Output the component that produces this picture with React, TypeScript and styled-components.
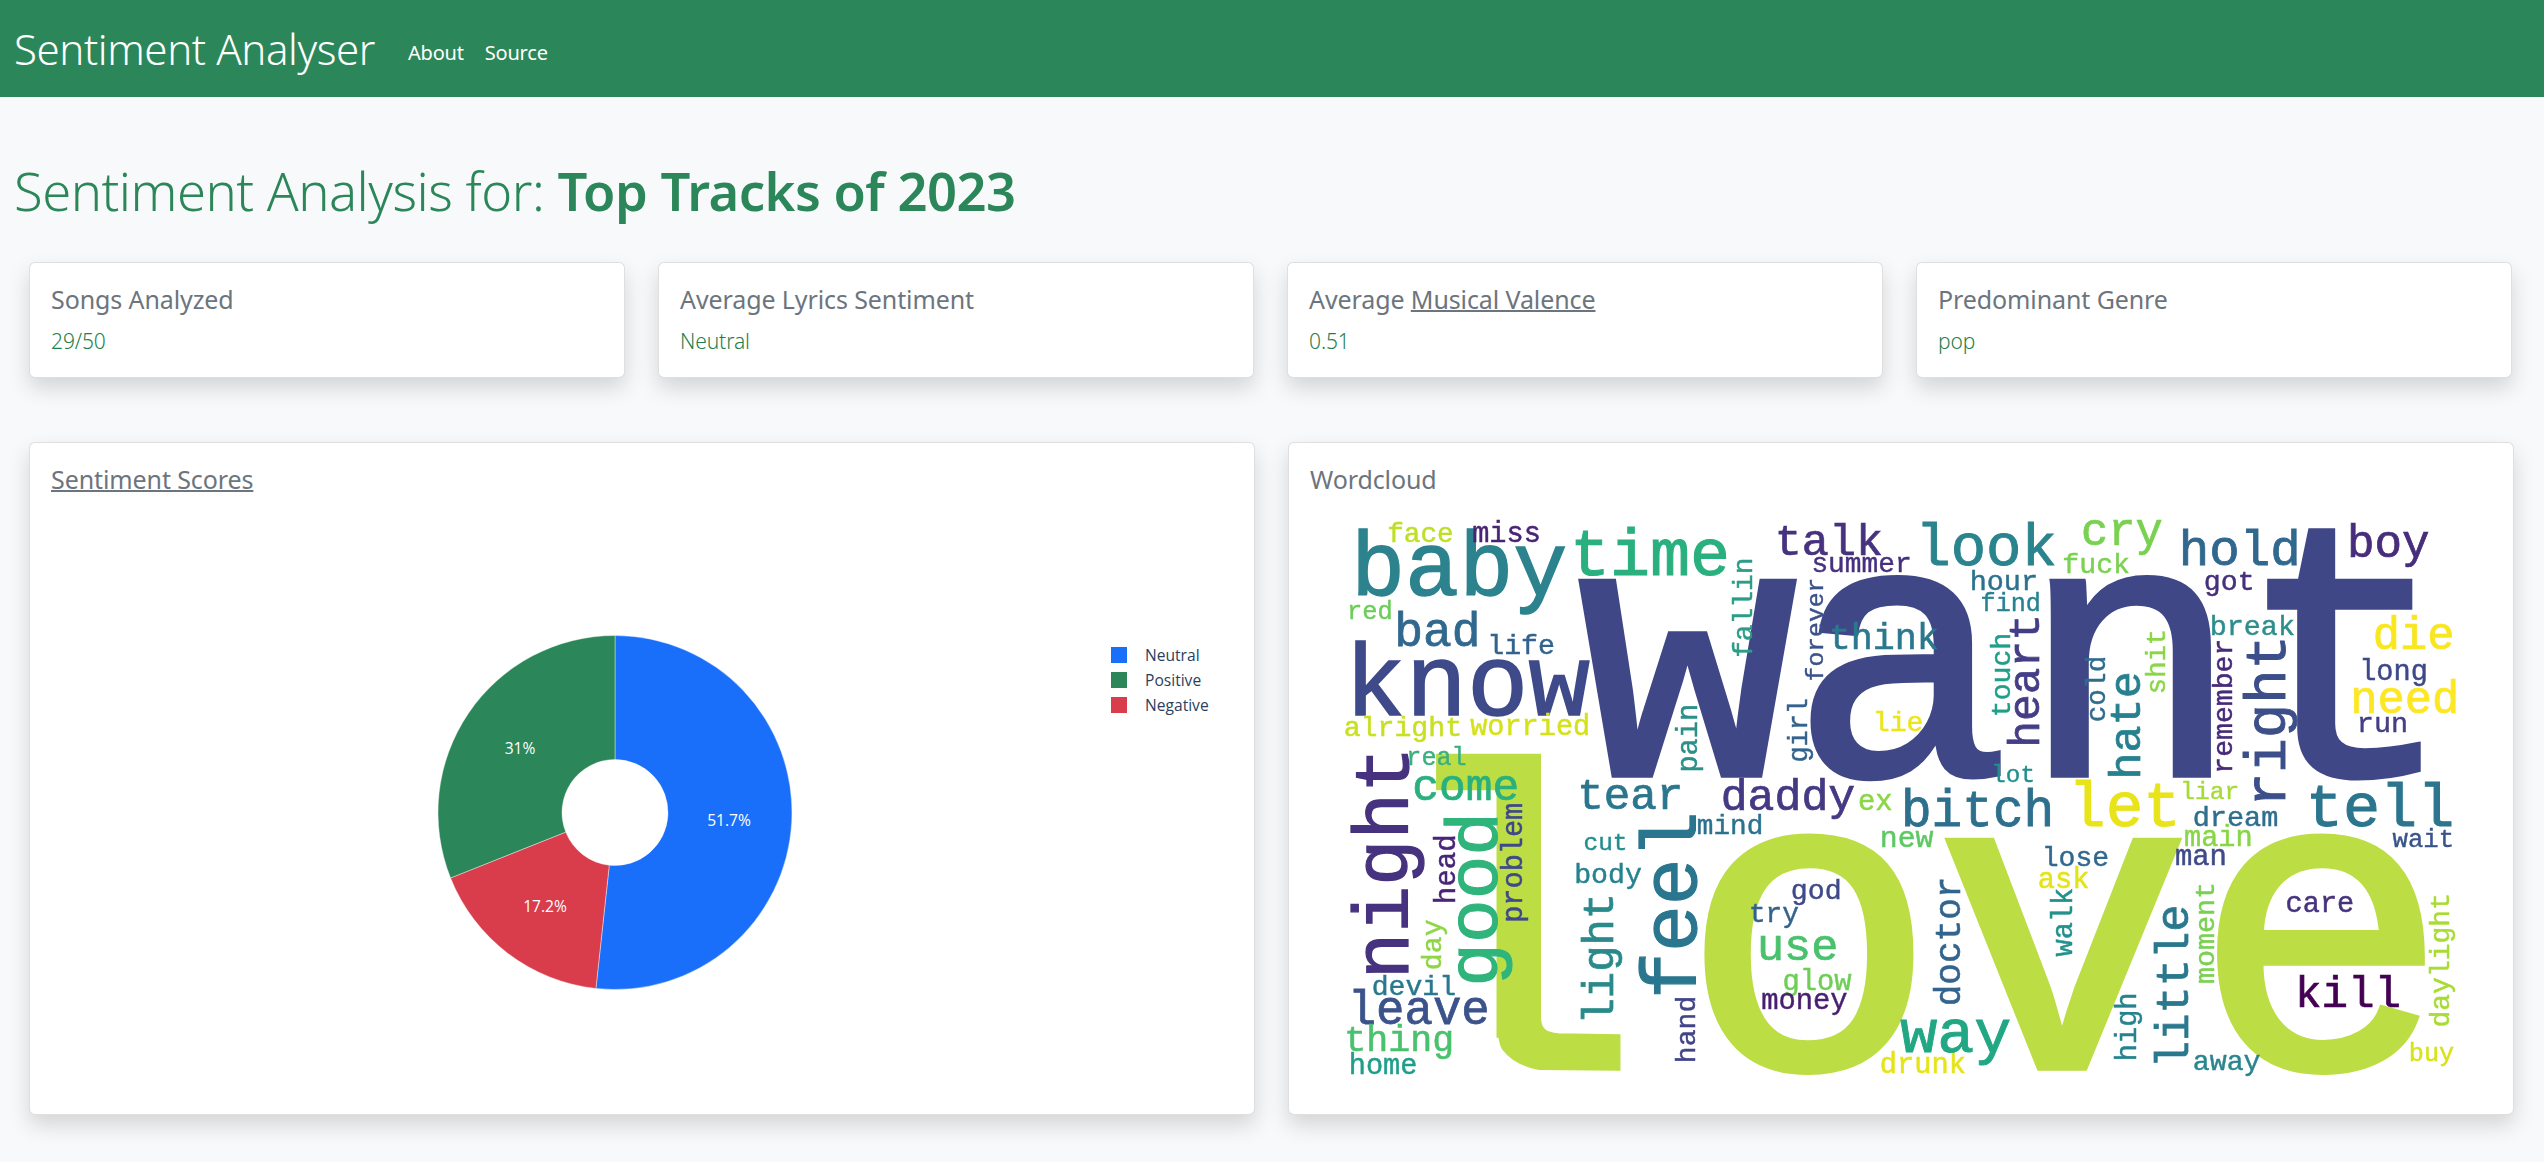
import React from "react";
import styled, { createGlobalStyle } from "styled-components";

const GlobalStyle = createGlobalStyle`
  html, body {
    margin: 0;
    padding: 0;
    background-color: #f8f9fa;
    font-family: "Noto Sans", sans-serif;
  }
`;

// [text, start, end, baseline, colour] in cloud units. Rotated words read upward.
type Word = [string, number, number, number, string];

const CLOUD_SCALE = 2.529;
const RIGHT_HALF_OFFSET = 600 * CLOUD_SCALE;

const GREEN = "#2b8759";

// the two big words get their letters placed one by one
const bigWords = [
  { text: "love", size: 1083, base: 1435, colour: "#bcdd44", xs: "209 960 1603 2255" },
  { text: "want", size: 925, base: 695, colour: "#404787", xs: "700 1238 1820 2365" },
];

const leftFlat: Word[] = [
  ["baby", 140, 660, 240, "#2c838e"],
  ["time", 690, 1075, 190, "#2ab07f"],
  ["talk", 1205, 1465, 138, "#46327e"],
  ["face", 222, 382, 105, "#bddf26"],
  ["miss", 437, 602, 105, "#482475"],
  ["summer", 1295, 1540, 182, "#46307e"],
  ["red", 120, 228, 300, "#6ccd5a"],
  ["bad", 243, 447, 370, "#31688e"],
  ["life", 475, 638, 390, "#33638d"],
  ["know", 125, 715, 545, "#3e4a89"],
  ["alright", 112, 403, 598, "#c8e020"],
  ["worried", 432, 727, 595, "#d5e21a"],
  ["real", 270, 415, 670, "#3aaf80"],
  ["come", 288, 545, 760, "#2ab07f"],
  ["tear", 705, 960, 782, "#2a768e"],
  ["daddy", 1068, 1395, 783, "#443a83"],
  ["ex", 1413, 1492, 785, "#8bd646"],
  ["mind", 1005, 1165, 845, "#2c728e"],
  ["cut", 718, 822, 885, "#218e8d"],
  ["new", 1468, 1595, 878, "#5ec962"],
  ["body", 695, 858, 968, "#26828e"],
  ["use", 1160, 1352, 1163, "#4ac16d"],
  ["god", 1243, 1363, 1008, "#3e4a89"],
  ["try", 1137, 1255, 1068, "#33638d"],
  ["glow", 1222, 1388, 1240, "#6ece58"],
  ["money", 1168, 1378, 1288, "#481f70"],
  ["devil", 183, 388, 1252, "#2a788e"],
  ["leave", 125, 470, 1325, "#3b528b"],
  ["thing", 115, 382, 1393, "#4ac16d"],
  ["home", 125, 290, 1452, "#1f9e89"],
  ["drunk", 1468, 1677, 1450, "#e5e419"],
  ["way", 1525, 1787, 1395, "#22a785"],
  ["lie", 1450, 1570, 583, "#ece51b"],
  ["think", 1340, 1607, 378, "#2a788e"],
  ["bitch", 1525, 1897, 825, "#2d708e"],
];

const leftTurned: Word[] = [
  ["night", 1200, 635, 270, "#46327e"],
  ["good", 1220, 800, 495, "#2fb47c"],
  ["feel", 1250, 800, 1000, "#2a768e"],
  ["light", 1320, 1000, 790, "#2a8a8b"],
  ["problem", 1065, 770, 560, "#3f4889"],
  ["head", 1018, 850, 390, "#482576"],
  ["day", 1185, 1065, 355, "#8ed645"],
  ["hand", 1420, 1258, 997, "#414487"],
  ["pain", 685, 520, 1002, "#2a9088"],
  ["fallin", 395, 150, 1140, "#2c9c88"],
  ["forever", 455, 200, 1320, "#3b528b"],
  ["girl", 660, 505, 1280, "#33638d"],
];

const rightFlat: Word[] = [
  ["look", 45, 385, 165, "#2a848e"],
  ["cry", 462, 655, 115, "#7ad151"],
  ["hold", 710, 1003, 165, "#31688e"],
  ["boy", 1135, 1330, 145, "#472d7b"],
  ["fuck", 412, 575, 185, "#7bd151"],
  ["hour", 178, 342, 228, "#2c728e"],
  ["find", 205, 350, 280, "#26828e"],
  ["got", 770, 890, 228, "#462f7c"],
  ["break", 785, 992, 342, "#2c8e8d"],
  ["die", 1200, 1393, 378, "#f8e621"],
  ["long", 1163, 1328, 455, "#3f4889"],
  ["need", 1143, 1405, 540, "#fde725"],
  ["run", 1157, 1278, 588, "#433e85"],
  ["lot", 232, 335, 712, "#218f8d"],
  ["liar", 710, 852, 755, "#a5db36"],
  ["let", 432, 698, 825, "#e8e419"],
  ["tell", 1033, 1390, 825, "#2b758e"],
  ["dream", 742, 950, 825, "#2e6e8e"],
  ["main", 720, 885, 875, "#88d548"],
  ["wait", 1247, 1395, 878, "#3a538b"],
  ["man", 697, 820, 922, "#3e4a89"],
  ["lose", 360, 522, 925, "#31688e"],
  ["ask", 350, 472, 982, "#e3e418"],
  ["care", 977, 1142, 1043, "#46327e"],
  ["kill", 1003, 1258, 1283, "#440154"],
  ["away", 742, 905, 1442, "#2a858e"],
  ["buy", 1288, 1395, 1420, "#d8e219"],
];

const rightTurned: Word[] = [
  ["heart", 620, 295, 350, "#433e85"],
  ["touch", 545, 340, 275, "#1f9e89"],
  ["hate", 700, 440, 605, "#27808e"],
  ["cold", 558, 398, 517, "#2f6c8e"],
  ["shit", 487, 330, 668, "#8bd646"],
  ["remember", 688, 355, 838, "#472a7a"],
  ["right", 768, 350, 970, "#3c4f8a"],
  ["doctor", 1275, 958, 150, "#32648e"],
  ["walk", 1150, 985, 432, "#21918c"],
  ["little", 1430, 1030, 725, "#2a788e"],
  ["moment", 1220, 970, 792, "#7ad151"],
  ["high", 1415, 1250, 595, "#26828e"],
  ["daylight", 1330, 998, 1385, "#a8db34"],
];

const wordSize = (text: string, span: number) =>
  span / (0.6 * text.length - 0.12);

const FlatWords = ({ words }: { words: Word[] }) => (
  <>
    {words.map(([text, start, end, base, colour]) => {
      const size = wordSize(text, end - start);
      return (
        <CloudWord
          key={text}
          x={start - 0.06 * size}
          y={base}
          fontSize={size}
          fill={colour}
          stroke={colour}
          strokeWidth={size * 0.016}
        >
          {text}
        </CloudWord>
      );
    })}
  </>
);

const TurnedWords = ({ words }: { words: Word[] }) => (
  <>
    {words.map(([text, start, end, base, colour]) => {
      const size = wordSize(text, start - end);
      return (
        <CloudWord
          key={text}
          transform={`translate(${base} ${start + 0.06 * size}) rotate(-90)`}
          fontSize={size}
          fill={colour}
          stroke={colour}
          strokeWidth={size * 0.016}
        >
          {text}
        </CloudWord>
      );
    })}
  </>
);

// page coordinates, the pie is drawn from the top going clockwise
const CX = 615;
const CY = 812.5;
const OUTER = 177;
const INNER = 53;

const slicePath = (from: number, to: number) => {
  const point = (radius: number, turn: number) => {
    const angle = turn * 2 * Math.PI;
    return `${CX + radius * Math.sin(angle)} ${CY - radius * Math.cos(angle)}`;
  };
  const large = to - from > 0.5 ? 1 : 0;
  return `M${point(OUTER, from)} A${OUTER} ${OUTER} 0 ${large} 1 ${point(OUTER, to)} L${point(INNER, to)} A${INNER} ${INNER} 0 ${large} 0 ${point(INNER, from)} Z`;
};

const slices = [
  { label: "51.7%", from: 0, to: 0.5172, colour: "#1a6ffa", x: 729, y: 826 },
  { label: "17.2%", from: 0.5172, to: 0.6897, colour: "#d93d4b", x: 545, y: 912 },
  { label: "31%", from: 0.6897, to: 1, colour: GREEN, x: 520, y: 754 },
];

const legend = [
  { label: "Neutral", colour: "#1a6ffa" },
  { label: "Positive", colour: GREEN },
  { label: "Negative", colour: "#d93d4b" },
];

const stats = [
  { title: "Songs Analyzed", value: "29/50" },
  { title: "Average Lyrics Sentiment", value: "Neutral" },
  { title: "Average ", hint: "Musical Valence", value: "0.51" },
  { title: "Predominant Genre", value: "pop" },
];

const App = () => {
  return (
    <Page>
      <GlobalStyle />
      <Navbar>
        <Brand>Sentiment Analyser</Brand>
        <NavLink>About</NavLink>
        <NavLink>Source</NavLink>
      </Navbar>

      <Heading>
        Sentiment Analysis for: <strong>Top Tracks of 2023</strong>
      </Heading>

      <StatGrid>
        {stats.map((stat) => (
          <StatCard key={stat.value}>
            <CardTitle>
              {stat.title}
              {stat.hint && <Hint>{stat.hint}</Hint>}
            </CardTitle>
            <StatValue>{stat.value}</StatValue>
          </StatCard>
        ))}
      </StatGrid>

      <ChartGrid>
        <ChartCard>
          <CardTitle>
            <Hint>Sentiment Scores</Hint>
          </CardTitle>
          <Figure viewBox="51 503 1182 591">
            {slices.map((slice) => (
              <path
                key={slice.label}
                d={slicePath(slice.from, slice.to)}
                fill={slice.colour}
                stroke="#ffffff"
                strokeWidth={0.4}
              />
            ))}
            {slices.map((slice) => (
              <SliceLabel
                key={slice.label}
                x={slice.x}
                y={slice.y}
                textAnchor="middle"
              >
                {slice.label}
              </SliceLabel>
            ))}
            {legend.map((item, i) => (
              <g key={item.label}>
                <rect
                  x={1111}
                  y={647 + i * 25}
                  width={16}
                  height={16}
                  fill={item.colour}
                />
                <LegendLabel x={1145} y={661 + i * 25}>
                  {item.label}
                </LegendLabel>
              </g>
            ))}
          </Figure>
        </ChartCard>

        <ChartCard>
          <CardTitle>Wordcloud</CardTitle>
          <CloudFigure viewBox="22.8 7.6 2989 1494.7">
            {bigWords.map((word) => (
              <CloudWord
                key={word.text}
                x={word.xs}
                y={word.base}
                fontSize={word.size}
                fill={word.colour}
                stroke={word.colour}
                strokeWidth={word.size * 0.016}
              >
                {word.text}
              </CloudWord>
            ))}
            <FlatWords words={leftFlat} />
            <TurnedWords words={leftTurned} />
            <g transform={`translate(${RIGHT_HALF_OFFSET} 0)`}>
              <FlatWords words={rightFlat} />
              <TurnedWords words={rightTurned} />
            </g>
          </CloudFigure>
        </ChartCard>
      </ChartGrid>
    </Page>
  );
};

export default App;

const Page = styled.div`
  min-height: 100vh;
  box-sizing: border-box;
  background-color: #f8f9fa;
  overflow: hidden;
`;

const Navbar = styled.nav`
  height: 97px;
  background-color: ${GREEN};
  display: flex;
  align-items: center;
  padding-left: 14px;
  color: white;
`;

const Brand = styled.span`
  font-size: 42px;
  font-weight: 300;
  letter-spacing: -0.4px;
  margin-right: 33px;
`;

const NavLink = styled.span`
  font-size: 20px;
  font-weight: 400;
  margin-right: 21px;
  letter-spacing: -0.2px;
  padding-top: 7px;
`;

const Heading = styled.h1`
  margin: 63px 0 0 14px;
  height: 102px;
  font-size: 52.5px;
  line-height: 62px;
  font-weight: 300;
  letter-spacing: -0.5px;
  color: ${GREEN};

  strong {
    font-weight: 600;
  }
`;

const StatGrid = styled.div`
  display: grid;
  grid-template-columns: repeat(4, 1fr);
  gap: 33px;
  padding: 0 32px 0 29px;
`;

const ChartGrid = styled.div`
  display: grid;
  grid-template-columns: repeat(2, 1fr);
  gap: 33px;
  padding: 64px 32px 0 29px;
`;

const Card = styled.div`
  box-sizing: border-box;
  background-color: white;
  border: 1px solid rgba(0, 0, 0, 0.125);
  border-radius: 6px;
  box-shadow: 0 10px 21px rgba(0, 0, 0, 0.15);
  padding: 20px 21px;
`;

const StatCard = styled(Card)`
  height: 116px;
`;

const ChartCard = styled(Card)`
  height: 673px;
`;

const CardTitle = styled.div`
  font-size: 25px;
  line-height: 32px;
  font-weight: 400;
  letter-spacing: -0.1px;
  color: #6c757d;
`;

const Hint = styled.span`
  text-decoration: underline;
  text-decoration-thickness: 2px;
`;

const StatValue = styled.div`
  margin-top: 13px;
  font-size: 21px;
  line-height: 26px;
  font-weight: 300;
  letter-spacing: -0.1px;
  color: #1f7f4c;
`;

const Figure = styled.svg`
  display: block;
  width: 1182px;
  height: 591px;
  margin-top: 8px;
`;

const CloudFigure = styled(Figure)`
  filter: blur(0.5px);
`;

const CloudWord = styled.text`
  font-family: "Liberation Mono", monospace;
`;

const SliceLabel = styled.text`
  font-family: "Open Sans", sans-serif;
  font-size: 15.6px;
  fill: white;
`;

const LegendLabel = styled.text`
  font-family: "Open Sans", sans-serif;
  font-size: 15.6px;
  fill: #2a3f5f;
`;
